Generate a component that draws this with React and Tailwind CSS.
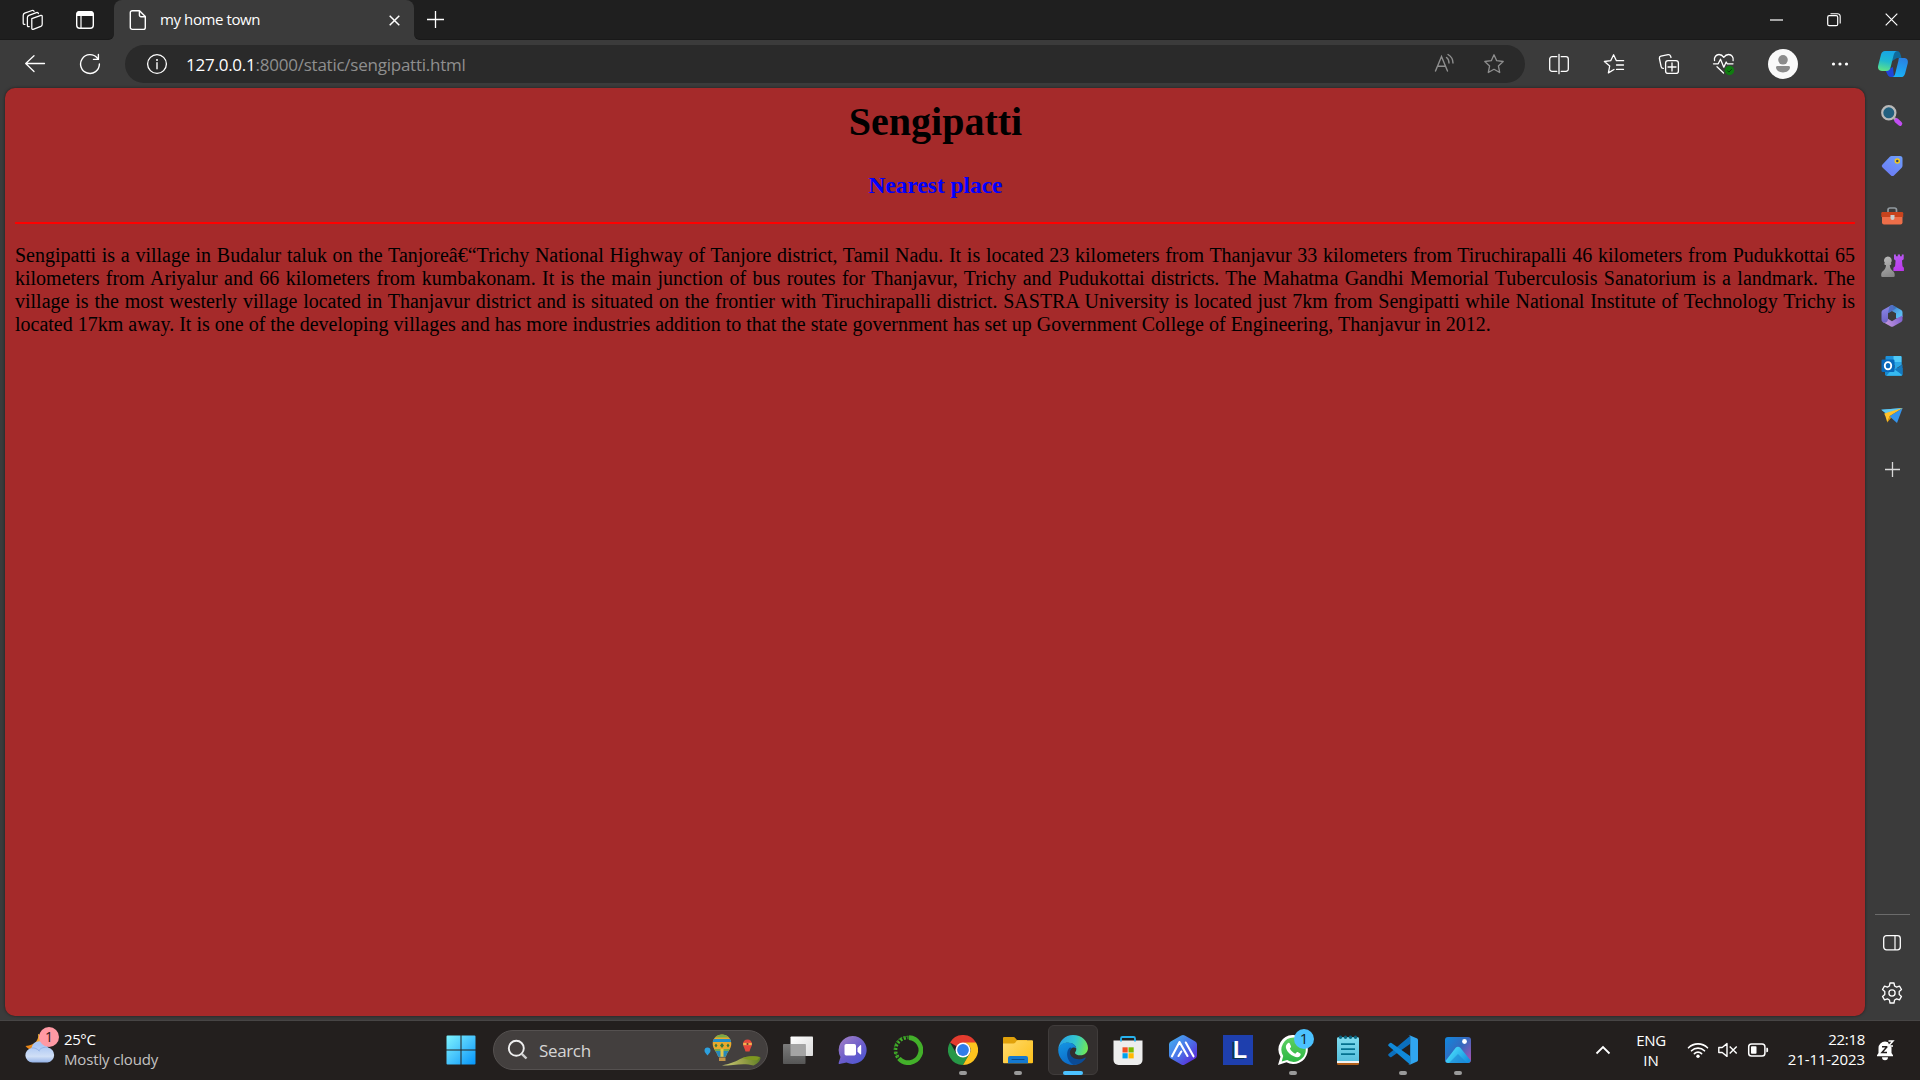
import React from "react";

const Svg = ({ w = 30, h = 30, children, className = "" }) => (
  <svg width={w} height={h} viewBox={`0 0 ${w} ${h}`} fill="none" className={`shrink-0 ${className}`}>
    {children}
  </svg>
);

const line = { stroke: "#fff", strokeWidth: 1.3, strokeLinecap: "round", strokeLinejoin: "round" };

/* ---------- tab strip ---------- */

const Workspaces = () => (
  <Svg w={22} h={22}>
    <g {...line} strokeWidth="1.25">
      <path d="M9.800 9.600 18.900 6.400a1 1 0 0 1 1.300 1v7.800a2.400 2.400 0 0 1-1.400 2.200l-7.600 3a1 1 0 0 1-1.400-1z" />
      <path d="M7.200 17.600c-1 .4-1.800-.1-1.800-1V8.600a2.400 2.400 0 0 1 1.500-2.200l7.500-2.800c1-.3 1.800 0 2 .9" />
      <path d="M2.900 15.300c-1 .4-1.700-.1-1.700-1V6.400a2.400 2.400 0 0 1 1.500-2.200L10.100 1.500c1-.3 1.700 0 1.900.8" />
    </g>
  </Svg>
);

const TabActions = () => (
  <Svg w={20} h={20}>
    <rect x="1.700" y="1.700" width="16.600" height="16.600" rx="3" stroke="#fff" strokeWidth="1.4" />
    <path d="M1.500 6V4a3 3 0 0 1 3-3h11a3 3 0 0 1 3 3v2z" fill="#fff" />
    <path d="M6 6v12" stroke="#fff" strokeWidth="1.2" />
  </Svg>
);

const Doc = () => (
  <Svg w={18} h={22}>
    <path {...line} strokeWidth="1.4" d="M3.200 1.700h7.300l5.800 5.800v11a1.900 1.900 0 0 1-1.900 1.900H3.200a1.900 1.900 0 0 1-1.900-1.900V3.600a1.900 1.900 0 0 1 1.900-1.900zM10.400 1.900v4.200a1.600 1.600 0 0 0 1.600 1.600h4.200" />
  </Svg>
);

const Cross = ({ s = 12, sw = 1.4 }) => (
  <Svg w={s} h={s}>
    <path d={`M.7.7 ${s - 0.7} ${s - 0.7}M${s - 0.7}.7.7 ${s - 0.7}`} stroke="#fff" strokeWidth={sw} />
  </Svg>
);

const Plus = ({ s = 18, c = "#fff" }) => (
  <Svg w={s} h={s}>
    <path d={`M${s / 2} 0v${s}M0 ${s / 2}h${s}`} stroke={c} strokeWidth="1.3" />
  </Svg>
);

/* ---------- toolbar ---------- */

const Back = () => (
  <Svg w={22} h={20}>
    <path {...line} strokeWidth="1.3" d="M10 1.800 1.700 9.500l8.300 8M2 9.500h18.500" />
  </Svg>
);
const Reload = () => (
  <Svg w={22} h={22}>
    <path {...line} strokeWidth="1.4" d="M20.400 11A9.400 9.400 0 1 1 18.300 5.100M19.400 1.500v4.900h-4.900" />
  </Svg>
);
const Info = () => (
  <Svg w={22} h={22}>
    <circle cx="11" cy="11" r="9.400" stroke="#fff" strokeWidth="1.3" />
    <path d="M11 9.700v6" stroke="#fff" strokeWidth="1.4" strokeLinecap="round" />
    <circle cx="11" cy="7" r="1" fill="#fff" />
  </Svg>
);
const ReadAloud = () => (
  <Svg w={22} h={22}>
    <g stroke="#8f8f8f" strokeWidth="1.4" strokeLinecap="round">
      <path d="M1.500 18 7.500 3.600 13.500 18M3.500 13.200h8" />
      <path d="M12.500 4.500c1.700 1.200 2.500 2.900 2.500 5.500M14 1.500c3.200 1.900 5 4.800 5 8.500" />
    </g>
  </Svg>
);
const Star = () => (
  <Svg w={22} h={22}>
    <path d="m11 1.800 2.700 5.900 6.500.8-4.800 4.400 1.300 6.600L11 16.300l-5.700 3.200 1.300-6.600-4.800-4.400 6.500-.8z" stroke="#8f8f8f" strokeWidth="1.3" strokeLinejoin="round" />
  </Svg>
);
const Split = () => (
  <Svg w={22} h={22}>
    <path {...line} strokeWidth="1.3" d="M8.800 3.700H4a2.300 2.300 0 0 0-2.300 2.300v10A2.300 2.300 0 0 0 4 18.300h4.800M11 1.300v19.400M13.200 3.700H18A2.300 2.300 0 0 1 20.300 6v10a2.300 2.300 0 0 1-2.300 2.300h-4.800" />
  </Svg>
);
const Favorites = () => (
  <Svg w={22} h={22}>
    <path {...line} d="M11 16.500 5.400 19.900l1.300-6.900L1.400 8.500l6.300-.8L10.600 1.800l2.800 5.900h7.200M13.500 12h7M13.500 16.400h7" />
  </Svg>
);
const Collections = () => (
  <Svg w={22} h={22}>
    <g {...line}>
      <rect x="7.600" y="7.600" width="12.800" height="12.800" rx="2.500" />
      <path d="M14 10v8M10 14h8" />
      <path d="M5.400 15.400c-1.200.1-1.900-.5-2.200-1.600L1.400 5.500c-.2-1.200.4-2 1.500-2.300l7.200-1.600c1.200-.2 2 .3 2.400 1.400l.5 1.500" />
    </g>
  </Svg>
);
const Essentials = () => (
  <Svg w={24} h={24}>
    <path {...line} d="M2.500 8.500C1.900 5.200 4.200 2.500 7 2.500c2 0 3.600 1 4.800 2.800C13 3.500 14.600 2.500 16.600 2.500c3.200 0 5.200 2.800 4.500 6.200M1.500 11.800h4.700l2.300-4.600 3.300 8 2.400-5.200 1 1.800h5.800M5 14.800l6.500 6.200" />
    <circle cx="17.500" cy="18.500" r="4.700" fill="#107c10" />
    <path d="m15.300 18.500 1.600 1.600 2.900-3" stroke="#0a3d0a" strokeWidth="1" />
  </Svg>
);
const Avatar = () => (
  <Svg>
    <circle cx="15" cy="15" r="15" fill="#f9f9f9" />
    <circle cx="15" cy="10.800" r="4.800" fill="#8b8b8b" />
    <path d="M9.500 17h11a1.500 1.500 0 0 1 1.500 1.600c-.2 3-3.200 4.900-7 4.900s-6.800-1.900-7-4.900A1.500 1.500 0 0 1 9.500 17z" fill="#8b8b8b" />
  </Svg>
);
const Dots = () => (
  <Svg w={18} h={6}>
    <circle cx="2.500" cy="3" r="1.600" fill="#fff" />
    <circle cx="9" cy="3" r="1.600" fill="#fff" />
    <circle cx="15.500" cy="3" r="1.600" fill="#fff" />
  </Svg>
);
const Copilot = () => (
  <Svg w={32} h={30}>
    <defs>
      <linearGradient id="cpA" x1="10" y1="1" x2="6" y2="21" gradientUnits="userSpaceOnUse">
        <stop stopColor="#16a3e8" /><stop offset=".55" stopColor="#20b9cf" /><stop offset="1" stopColor="#5be08c" />
      </linearGradient>
      <linearGradient id="cpB" x1="26" y1="8" x2="20" y2="28" gradientUnits="userSpaceOnUse">
        <stop stopColor="#2b7de0" /><stop offset="1" stopColor="#18b4f7" />
      </linearGradient>
    </defs>
    <path d="M16 2h4c2 0 3 1.500 3.700 4l.8 3H20l-5 3z" fill="#0f6a9c" />
    <path d="M8.500 21.500 16 18l1 10h-3c-2.200 0-3.200-1.500-3.800-3z" fill="#1f46d8" />
    <path d="M8 2h12c-2 .4-2.800 2-3.400 4.200l-3 12C13 20.600 12 22 9.500 22H5c-3 0-4.600-2.200-3.800-5.400L4 5.500C4.600 3.200 6 2 8 2z" fill="url(#cpA)" />
    <path d="M22 9h5c3 0 4.500 2.200 3.700 5.400l-2.600 10C27.500 26.800 26 28 24 28h-9c2-.3 2.700-1.600 3.300-3.800l3-12C21.700 10.500 21.500 9.500 22 9z" fill="url(#cpB)" />
  </Svg>
);

/* ---------- sidebar ---------- */

const SideSearch = () => (
  <Svg w={24} h={24}>
    <path d="m14 14 2.500 2.500" stroke="#aaa" strokeWidth="2.500" />
    <path d="m16.500 16.500 3.500 3.200" stroke="#c14df2" strokeWidth="4.500" strokeLinecap="round" />
    <circle cx="8.800" cy="8.800" r="6.600" fill="#22607f" stroke="#b9b9b9" strokeWidth="2.200" />
  </Svg>
);
const SideTag = () => (
  <Svg w={24} h={24}>
    <defs><linearGradient id="tg" x1="18" y1="2" x2="8" y2="22" gradientUnits="userSpaceOnUse"><stop stopColor="#6d9bfa" /><stop offset="1" stopColor="#6c7cf5" /></linearGradient></defs>
    <path d="M11.500 2H20a2.500 2.500 0 0 1 2.500 2.500v7.200c0 .8-.3 1.400-.8 2l-7.500 7.500a2.500 2.500 0 0 1-3.500 0L2.500 13.500a2 2 0 0 1 0-3l7.300-7.800A2.500 2.500 0 0 1 11.500 2z" fill="url(#tg)" />
    <circle cx="17.300" cy="7" r="2" fill="#30466b" stroke="#f4c81f" strokeWidth="1.500" />
  </Svg>
);
const SideToolbox = () => (
  <Svg w={24} h={20}>
    <path d="M8 6V4a2 2 0 0 1 2-2h4.500a2 2 0 0 1 2 2v2" stroke="#929aa0" strokeWidth="1.700" />
    <path d="M2 10h20.500v6.500a2 2 0 0 1-2 2H4a2 2 0 0 1-2-2z" fill="#ed6e49" />
    <path d="M2.500 6H22a1.200 1.200 0 0 1 1.200 1.200V11H1.300V7.200A1.200 1.200 0 0 1 2.500 6z" fill="#c8431d" />
    <path d="M10.500 9h4v3a2 2 0 0 1-4 0z" fill="#c8cdd0" />
  </Svg>
);
const SideGames = () => (
  <Svg w={24} h={26}>
    <defs>
      <linearGradient id="rk" x1="14" y1="2" x2="22" y2="19" gradientUnits="userSpaceOnUse"><stop stopColor="#b65cf3" /><stop offset="1" stopColor="#bd35ea" /></linearGradient>
      <linearGradient id="pw" x1="4" y1="4" x2="12" y2="24" gradientUnits="userSpaceOnUse"><stop stopColor="#b9b9b9" /><stop offset="1" stopColor="#848484" /></linearGradient>
    </defs>
    <path d="M14 1.500h1.900v1.700h1.900V1.500H20v1.700h1.800V1.500h1.900v4.700l-1.700 1.200.5 5.800 1.400 1.500V18H13.400v-3.300l1.700-1.500.5-5.800L14 6.200z" fill="url(#rk)" />
    <path d="M7.800 3.500a4 4 0 0 1 3 6.600c.7.200.7 1.600-.2 1.800-.4 0-.8.100-.8.100.1 2.800.9 4.300 2.700 5.700 1.500 1 2.200 2 2.200 4v1a1.300 1.300 0 0 1-1.300 1.300H2.500a1.300 1.300 0 0 1-1.300-1.300v-1c0-2 .7-3 2.200-4C5.100 16.300 5.900 14.800 6 12l-1-.1c-.9-.2-.9-1.600-.1-1.800a4 4 0 0 1 2.900-6.600z" fill="url(#pw)" />
  </Svg>
);
const Side365 = () => (
  <Svg w={24} h={24}>
    <defs>
      <linearGradient id="m1" x1="2" y1="3" x2="7" y2="20" gradientUnits="userSpaceOnUse"><stop stopColor="#8a86e6" /><stop offset="1" stopColor="#6a5fc0" /></linearGradient>
      <linearGradient id="m2" x1="10" y1="2" x2="22" y2="16" gradientUnits="userSpaceOnUse"><stop stopColor="#3b74c4" /><stop offset=".6" stopColor="#55b5ee" /><stop offset="1" stopColor="#62c6f5" /></linearGradient>
      <linearGradient id="m3" x1="5" y1="21" x2="21" y2="15" gradientUnits="userSpaceOnUse"><stop stopColor="#c698dd" /><stop offset="1" stopColor="#8465d2" /></linearGradient>
    </defs>
    <path d="M10.800 1.500a2.500 2.500 0 0 1 2.400 0l8 4.500a2.500 2.500 0 0 1 1.300 2.200V13L16 14.500V9.300L10.500 6.200 8 4z" fill="url(#m2)" />
    <path d="M22.500 11.500v4.300a2.500 2.500 0 0 1-1.300 2.200l-8 4.500a2.500 2.500 0 0 1-2.400 0l-8-4.500L8 14.700l4 2.600 4-2.600z" fill="url(#m3)" />
    <path d="M10.800 1.500 2.800 6a2.500 2.500 0 0 0-1.300 2.200v7.600c0 1.700 1.400 2.900 3 2.900C6.600 18.700 8 17.200 8 15V9.300l6-3.500-1-4.400a2.500 2.500 0 0 0-2.200.1z" fill="url(#m1)" />
    <path d="M9.500 2.300 8 9.300l6-3.500 3-2.200-3.800-2.100a2.500 2.500 0 0 0-2.400 0z" fill="#3a68b8" opacity=".7" />
  </Svg>
);
const SideOutlook = () => (
  <Svg w={24} h={22}>
    <path d="M5.500 2A1 1 0 0 1 6.500 1h14a1 1 0 0 1 1 1v8h-16z" fill="#1d91da" />
    <path d="M13.500 1h7a1 1 0 0 1 1 1v5h-8z" fill="#4fc9f7" />
    <path d="M5 13h17.500v6.500a1.300 1.300 0 0 1-1.300 1.300H6.300A1.300 1.300 0 0 1 5 19.500z" fill="#1689d2" />
    <path d="M12 14.500h3.500L22 20a1.300 1.300 0 0 1-1 .8H6.300z" fill="#35b9f1" />
    <path d="m22.500 9.500-7.500 5.300 7.500 5z" fill="#1479bf" />
    <path d="M14.500 7h7v3l-7 4.500z" fill="#2aa6e6" />
    <rect x="1.500" y="4.500" width="13" height="12.500" rx="1.200" fill="#0868ba" />
    <ellipse cx="8" cy="10.700" rx="3.200" ry="3.600" stroke="#fff" strokeWidth="1.900" />
  </Svg>
);
const SideDrop = () => (
  <Svg w={24} h={20}>
    <path d="M1.300 3.700 22.600 2 8.200 9.600z" fill="#39a9e6" />
    <path d="M22.600 2 17 17l-7.600-6.700z" fill="#3494ec" />
    <path d="m1.300 3.700 21.300-1.700L6.500 7.500z" fill="#61c7ef" />
    <path d="m4.200 7.400 18.400-5.400-12.800 8-2.500 6.500-1.800-6z" fill="#ffc22a" />
    <path d="m9.500 10.300-2.300 6.200 4-4.800z" fill="#e29a0c" />
  </Svg>
);
const PanelIcon = () => (
  <Svg w={20} h={18}>
    <rect x="1.700" y="1.700" width="16.600" height="14.200" rx="2.800" stroke="#fff" strokeWidth="1.300" />
    <path d="M13 2v14" stroke="#fff" strokeWidth="1.200" />
  </Svg>
);
const Gear = () => (
  <Svg w={24} h={24}>
    <path
      {...line}
      d="M10 2h4l.6 3 2 1.100 2.900-1 2 3.400-2.300 2v2.900l2.300 2-2 3.500-2.900-1-2 1.100-.6 3h-4l-.6-3-2-1.100-2.900 1-2-3.500 2.300-2v-2.900l-2.300-2 2-3.400 2.900 1 2-1.100z"
    />
    <circle cx="12" cy="12" r="3.100" stroke="#fff" strokeWidth="1.300" />
  </Svg>
);

/* ---------- taskbar ---------- */

const Weather = () => (
  <Svg w={34} h={38}>
    <defs>
      <linearGradient id="cl" x1="16" y1="17" x2="16" y2="36" gradientUnits="userSpaceOnUse"><stop stopColor="#a9c5f4" /><stop offset=".6" stopColor="#d0dff6" /><stop offset="1" stopColor="#86a8e4" /></linearGradient>
      <linearGradient id="mo" x1="14" y1="7" x2="6" y2="22" gradientUnits="userSpaceOnUse"><stop stopColor="#f6b63c" /><stop offset="1" stopColor="#e88213" /></linearGradient>
    </defs>
    <path d="M13 6c1.300 5-2.500 11.500-12.500 12 2.500 3.500 8 5 13 2l6-6V8z" fill="url(#mo)" />
    <path d="M7.500 34.500a7.300 7.300 0 0 1-1-14.500 8.500 8.500 0 0 1 16.500-.5 7.600 7.600 0 0 1-.5 15z" fill="url(#cl)" />
    <path d="M6.500 20c3-.6 6 1 8 3M13.500 23c2-3 6-4.500 9.500-3.500" stroke="#93b2e6" strokeWidth="1" />
  </Svg>
);
const Start = () => (
  <Svg>
    <defs><linearGradient id="st" x1="1" y1="1" x2="29" y2="29" gradientUnits="userSpaceOnUse"><stop stopColor="#7cf2fe" /><stop offset=".5" stopColor="#47c4fc" /><stop offset="1" stopColor="#0696fa" /></linearGradient></defs>
    <path d="M1.500.5H14.500V14.500H.5v-13a1 1 0 0 1 1-1zM15.500 .5h13a1 1 0 0 1 1 1v13H15.500zM.5 15.500H14.500v14H1.500a1 1 0 0 1-1-1zM15.500 15.500h14v13a1 1 0 0 1-1 1H15.500z" fill="url(#st)" />
  </Svg>
);
const SearchGlass = () => (
  <Svg w={22} h={22}>
    <circle cx="9.300" cy="9.300" r="7.500" stroke="#efefef" strokeWidth="1.900" />
    <path d="m14.800 14.800 4.700 4.700" stroke="#cfcfcf" strokeWidth="2.400" />
  </Svg>
);
const Balloons = () => (
  <Svg w={60} h={36}>
    <defs><linearGradient id="hill" x1="20" y1="31" x2="58" y2="24" gradientUnits="userSpaceOnUse"><stop stopColor="#c9cb78" /><stop offset=".5" stopColor="#9aa04a" /><stop offset="1" stopColor="#5b7d22" /></linearGradient></defs>
    <path d="M19 33.500c8-2 12-3 18-6.500 8-3.500 16-3 20.500-1.500 0 3-3 6.500-7 8-10-3-20 0-31.500 0z" fill="url(#hill)" />
    <path d="M39 26c6-2 13-2.200 18-1l-3 3.200c-6 .5-11-1-15-2.200z" fill="#7f981f" />
    <path d="M1.500 18.500a3 3 0 1 1 6 0c0 2-1.700 3.300-3 5-1.300-1.700-3-3-3-5z" fill="#2da0de" />
    <clipPath id="bal"><path d="M19 2.500c5.500 0 9.300 4 9.300 9.200 0 5-4 8-5.500 13h-7.600c-1.500-5-5.500-8-5.500-13 0-5.200 3.800-9.200 9.300-9.200z" /></clipPath>
    <g clipPath="url(#bal)">
      <path d="M9 2h20v24H9z" fill="#e9a92d" />
      <path d="M9 2h20v3.500H9zM9 17h20v2H9z" fill="#78a94a" />
      <path d="M9 7h20v3H9z" fill="#218ec9" />
      <path d="M9 19h20v6H9z" fill="#2689bb" />
      <path d="M17.500 17h3v8h-3z" fill="#e3c54a" />
      <path d="M13 11.500l1.500 2-1.500 2-1.500-2zM19 11l2 2.500-2 2.500-2-2.500zM25 11.500l1.500 2-1.500 2-1.500-2z" fill="#39773c" />
    </g>
    <path d="M16 25.500h6.500v3.500H16z" fill="#c49447" />
    <path d="M44.500 7.500c2.700 0 4.500 2 4.500 4.500 0 2.300-1.700 4-2.500 7.500h-4c-.8-3.500-2.500-5.200-2.500-7.500 0-2.500 1.800-4.500 4.500-4.500z" fill="#e4473c" />
    <path d="M40.200 12h8.600" stroke="#f2b04f" strokeWidth="2.300" />
    <circle cx="44.500" cy="12" r="1.100" fill="#6d352c" />
  </Svg>
);
const TaskView = () => (
  <Svg>
    <defs>
      <linearGradient id="tv" x1="8" y1="1" x2="29" y2="21" gradientUnits="userSpaceOnUse"><stop stopColor="#fff" /><stop offset="1" stopColor="#dcdcdc" /></linearGradient>
      <linearGradient id="tw" x1="0" y1="9" x2="0" y2="29" gradientUnits="userSpaceOnUse"><stop stopColor="#7b7b7b" /><stop offset="1" stopColor="#565656" /></linearGradient>
    </defs>
    <rect x="7.500" y="1.500" width="22.500" height="19.500" rx=".8" fill="url(#tv)" />
    <rect x="0" y="9" width="22.500" height="20" rx=".8" fill="url(#tw)" />
    <path d="M7.500 9h15v12h-15z" fill="#a4a4a4" />
  </Svg>
);
const Chat = () => (
  <Svg>
    <defs><linearGradient id="ch" x1="4" y1="3" x2="24" y2="28" gradientUnits="userSpaceOnUse"><stop stopColor="#9c7cc6" /><stop offset=".55" stopColor="#6b5dcb" /><stop offset="1" stopColor="#4f57d3" /></linearGradient></defs>
    <path d="M14.500 1a14 14 0 1 1-6 26.600L1.500 29c-1 0-1-.6-.8-1.300L2.500 22A14 14 0 0 1 14.500 1z" fill="url(#ch)" />
    <rect x="6.500" y="9" width="11.500" height="11.500" rx="1.700" fill="#fff" />
    <path d="m19.500 13 2.700-2.700c.5-.4 1-.2 1 .5v8c0 .6-.5.8-1 .4l-2.700-2.500z" fill="#fff" />
  </Svg>
);
const Anaconda = () => (
  <Svg>
    <path d="M16 2.700A12.500 12.500 0 1 1 6 23.500" stroke="#43b02a" strokeWidth="4.700" />
    <path d="M7.500 25a12.500 12.500 0 0 1 8-22.500" stroke="#43b02a" strokeWidth="3.600" strokeDasharray="2.200 1.600" />
    <path d="M5.300 22.500A12.300 12.300 0 0 1 15 1.500" stroke="#328a22" strokeWidth="1.200" strokeDasharray="1.500 1.300" />
  </Svg>
);
const Chrome = () => (
  <Svg>
    <path d="M15 15 2 7.500a15 15 0 0 1 26 0z" fill="#e33b2e" />
    <path d="M2 7.500A15 15 0 0 0 15 30l6.500-11.300L15 15 8.500 18.700z" fill="#279847" />
    <path d="M28 7.500A15 15 0 0 1 15 30l6.500-11.200A7.500 7.500 0 0 0 15 7.500z" fill="#fcc31e" />
    <circle cx="15" cy="15" r="7.500" fill="#fff" />
    <circle cx="15" cy="15" r="5.900" fill="#2f7de9" />
  </Svg>
);
const Folder = () => (
  <Svg>
    <defs><linearGradient id="fo" x1="2" y1="6" x2="28" y2="29" gradientUnits="userSpaceOnUse"><stop stopColor="#ffd96a" /><stop offset="1" stopColor="#fdc11c" /></linearGradient></defs>
    <path d="M0 3a1 1 0 0 1 1-1h9.500c.8 0 1.200.3 1.700.9L14 5h10v6H0z" fill="#e1a10a" />
    <path d="M0 8.500h10.500c.8 0 1.200-.2 1.700-.8L13.500 6c.4-.5.8-.7 1.500-.7h14a1 1 0 0 1 1 1v21a1 1 0 0 1-1 1H1a1 1 0 0 1-1-1z" fill="url(#fo)" />
    <path d="M5 28.300V23a2 2 0 0 1 2-2h16a2 2 0 0 1 2 2v5.300z" fill="#1479d0" />
    <path d="M9 24.500h12" stroke="#0b4c8b" strokeWidth="1.100" strokeLinecap="round" />
  </Svg>
);
const Edge = () => (
  <Svg>
    <defs>
      <linearGradient id="e1" x1="3" y1="7" x2="29" y2="14" gradientUnits="userSpaceOnUse"><stop stopColor="#2aa5e3" /><stop offset=".5" stopColor="#33c6cf" /><stop offset="1" stopColor="#6fe857" /></linearGradient>
      <linearGradient id="e2" x1="3" y1="10" x2="12" y2="30" gradientUnits="userSpaceOnUse"><stop stopColor="#1390e0" /><stop offset="1" stopColor="#0c69c6" /></linearGradient>
    </defs>
    <path d="M.3 14C1 6 7.200 0 15 0c9 0 15 6.300 15 13 0 4.500-3.500 7.300-7.500 7.300-3.400 0-5.500-1.300-5.500-2.400 0-.8 1.300-1.300 1.300-3.900 0-3.500-3.500-6.300-8.300-6.300C5.500 7.700 2 10 .3 14z" fill="url(#e1)" />
    <path d="M.2 14.500C1.200 10.300 4.800 7.500 9.500 7.500c5 0 8.500 2.800 8.700 6-1.500-1.800-6.700-1-6.700 4 0 6 6.500 9.500 12 8.500-1.700 2.300-5 4-8.500 4C7 30 0 23.500.2 14.500z" fill="url(#e2)" />
    <path d="M12 12.500c-4.500 3.500-4 13 3.500 17.400 4.500.2 9-2 12-6.400.4-.7 0-1.200-.8-.8-6.500 3.500-14.700.5-14.700-5.200 0-2 .8-3.500 2-4.500z" fill="#0b4b95" />
  </Svg>
);
const Store = () => (
  <Svg>
    <path d="M.5 5.500h29V25a5 5 0 0 1-5 5h-19a5 5 0 0 1-5-5z" fill="#ededed" />
    <path d="M8 6.500V3.500A1.500 1.500 0 0 1 9.500 2h11A1.500 1.500 0 0 1 22 3.500v3" stroke="#27b2ee" strokeWidth="1.800" />
    <path d="M9.500 12.300h5.200v5.200H9.500z" fill="#f04e22" />
    <path d="M15.500 12.300h5.200v5.200h-5.200z" fill="#7cb900" />
    <path d="M9.500 18.200h5.200v5.200H9.500z" fill="#00a2ed" />
    <path d="M15.500 18.200h5.200v5.200h-5.200z" fill="#ffb800" />
  </Svg>
);
const HexApp = () => (
  <Svg>
    <defs><linearGradient id="hx" x1="3" y1="5" x2="26" y2="26" gradientUnits="userSpaceOnUse"><stop stopColor="#45a6ef" /><stop offset=".5" stopColor="#4a72e8" /><stop offset="1" stopColor="#5a2cd8" /></linearGradient></defs>
    <path d="M13.200.6a3.600 3.600 0 0 1 3.600 0l10.500 6A3.500 3.500 0 0 1 29 9.700v10.600a3.500 3.500 0 0 1-1.700 3.100l-10.500 6a3.600 3.600 0 0 1-3.600 0l-10.500-6A3.500 3.500 0 0 1 1 20.300V9.700a3.500 3.500 0 0 1 1.700-3.100z" fill="url(#hx)" />
    <path d="M4 21.300 11.500 7l8 14M10.500 21l2.800-4.500M17.800 7.500l7.700 13.800" stroke="#fff" strokeWidth="2.100" strokeLinecap="round" strokeLinejoin="round" />
  </Svg>
);
const LApp = () => (
  <div className="flex h-[30px] w-[30px] items-center justify-center bg-[#1e3fae] pl-[4px] font-['Liberation_Sans'] text-[23px] leading-none font-bold text-white [text-shadow:-2px_1px_0_#0c3350]">
    L
  </div>
);
const WhatsApp = () => (
  <Svg>
    <defs><linearGradient id="wa" x1="15" y1="2" x2="15" y2="28" gradientUnits="userSpaceOnUse"><stop stopColor="#5ed063" /><stop offset="1" stopColor="#2cb642" /></linearGradient></defs>
    <path d="M15.500 0a14.500 14.500 0 1 1-7 27.300L0 30l2.500-8.200A14.500 14.500 0 0 1 15.500 0z" fill="#fff" />
    <path d="M15.500 2.500a12.200 12.200 0 1 1-6.300 22.600L3.700 26.500 5.200 21A12.200 12.200 0 0 1 15.500 2.500z" fill="url(#wa)" />
    <path d="M9.500 8.500c.8-.9 1.800-.9 2.300 0l1.200 2.700c.2.600-.1 1.200-1.200 2.400 1.300 2.500 3 4 5.500 5.100 1.400-1.500 1.800-1.900 2.400-1.600l2.600 1.400c.8.500.3 2-.5 2.700-1.500 1.300-3.500 1.200-6 .1-3.500-1.500-6.300-4.300-7.500-7.300-.8-2-.5-4 1.200-5.500z" fill="#fff" />
  </Svg>
);
const Notepad = () => (
  <Svg>
    <defs><linearGradient id="np" x1="15" y1="2" x2="15" y2="27" gradientUnits="userSpaceOnUse"><stop stopColor="#7fdbee" /><stop offset="1" stopColor="#55bfdd" /></linearGradient></defs>
    <path d="M4 26h22v2.500A1.500 1.500 0 0 1 24.500 30h-19A1.500 1.500 0 0 1 4 28.500z" fill="#b3601a" />
    <path d="M4 25h22v3H4z" fill="#f2f2f2" />
    <path d="M4 3.500A1.500 1.500 0 0 1 5.500 2h19A1.500 1.500 0 0 1 26 3.500V26H4z" fill="url(#np)" />
    <path d="M8 9.200h14M8 14.200h14M8 19.200h14" stroke="#04708f" strokeWidth="1.700" />
    <g fill="#0b6580"><circle cx="7.500" cy="2.300" r="1.700" /><circle cx="12.500" cy="2.300" r="1.700" /><circle cx="17.500" cy="2.300" r="1.700" /><circle cx="22.500" cy="2.300" r="1.700" /></g>
  </Svg>
);
const VSCode = () => (
  <Svg>
    <path d="m22 9-18.500 13a1.300 1.300 0 0 1-1.500 0L.6 20.700c-.6-.6-.6-1.200 0-1.800L22 1z" fill="#0b6fbd" />
    <path d="M22 21 3.500 8A1.300 1.300 0 0 0 2 8L.6 9.300c-.6.600-.6 1.200 0 1.800L22 29.500z" fill="#1089d9" />
    <path d="M21.500 29.800c-.6 0-1-.2-1.500-.6 1 .8 2.200.2 2.200-1V1.800c0-1.200-1.300-1.800-2.200-1 .6-.6 1.400-.7 2.100-.4l6.500 2.900c.9.400 1.400 1.100 1.400 2v19.400c0 .9-.5 1.600-1.400 2l-6.200 2.900z" fill="#30a5f0" />
  </Svg>
);
const Photos = () => (
  <Svg>
    <defs>
      <linearGradient id="p1" x1="3" y1="3" x2="28" y2="22" gradientUnits="userSpaceOnUse"><stop stopColor="#1386dc" /><stop offset=".55" stopColor="#3568be" /><stop offset="1" stopColor="#9a55b4" /></linearGradient>
      <linearGradient id="p2" x1="7" y1="14" x2="24" y2="28" gradientUnits="userSpaceOnUse"><stop stopColor="#4adcfa" /><stop offset="1" stopColor="#1490e0" /></linearGradient>
    </defs>
    <rect x="2" y="2" width="26" height="26" rx="3" fill="url(#p1)" />
    <path d="m2.500 26 10.200-13.200a3 3 0 0 1 4.600 0L27.700 25.500A3 3 0 0 1 25 28H5a3 3 0 0 1-2.500-2z" fill="url(#p2)" />
    <path d="m15 19-9 9h18z" fill="#1d7fd0" opacity=".55" />
    <circle cx="21.500" cy="6.500" r="2.400" fill="#fff" />
  </Svg>
);
const Chevron = () => (
  <Svg w={16} h={10}>
    <path d="M1.500 8.500 8 2l6.500 6.500" stroke="#fff" strokeWidth="1.800" />
  </Svg>
);
const Wifi = () => (
  <Svg w={22} h={18}>
    <g stroke="#fff" strokeWidth="1.600" strokeLinecap="round">
      <path d="M1.500 6.800a13.400 13.400 0 0 1 19 0M4.500 9.800a9.200 9.200 0 0 1 13 0M7.400 12.600a5.100 5.100 0 0 1 7.200 0" />
    </g>
    <circle cx="11" cy="15.200" r="1.700" fill="#fff" />
  </Svg>
);
const Muted = () => (
  <Svg w={22} h={18}>
    <path d="M1.800 6.500h3.400L10 2.600v12.800L5.200 11.500H1.800z" stroke="#fff" strokeWidth="1.400" strokeLinejoin="round" />
    <path d="m12.700 5.500 7 7m0-7-7 7" stroke="#fff" strokeWidth="1.400" />
  </Svg>
);
const Battery = () => (
  <Svg w={22} h={16}>
    <rect x="1.700" y="2" width="16.200" height="12" rx="2.800" stroke="#fff" strokeWidth="1.500" />
    <rect x="4" y="4.300" width="5.500" height="7.500" rx=".8" fill="#fff" />
    <path d="M19.300 5.800h.6c.8 0 1.200.5 1.200 1.200v2c0 .7-.4 1.200-1.200 1.200h-.6z" fill="#fff" />
  </Svg>
);
const Bell = () => (
  <Svg w={20} h={22}>
    <path d="M3.500 9a6.500 6.500 0 0 1 13 0v5l1.500 2.300v1H2v-1L3.500 14zM7 18.300h6a3 3 0 0 1-6 0z" fill="#fff" />
    <path d="M7 7.800h5l-5 5.600h5" stroke="#231f1e" strokeWidth="1.500" />
    <path d="M12.200 1h6.500v6.500h-4z" fill="#231f1e" />
    <path d="M13.500 2h4.500L13.500 7H18" stroke="#fff" strokeWidth="1.500" />
  </Svg>
);

const APPS = [
  { icon: TaskView }, { icon: Chat }, { icon: Anaconda }, { icon: Chrome, run: true }, { icon: Folder, run: true },
  { icon: Edge, active: true }, { icon: Store }, { icon: HexApp }, { icon: LApp }, { icon: WhatsApp, run: true, badge: "1" },
  { icon: Notepad }, { icon: VSCode, run: true }, { icon: Photos, run: true },
];

const AppButton = ({ icon: Icon, run, active, badge }) => (
  <div className="flex h-full w-[55px] pt-[4px] pl-[2px]">
    <div className={`relative flex h-[50px] w-[50px] items-center justify-center rounded-md ${active ? "border border-[#403c3b] bg-[#332f2e]" : ""}`}>
      <Icon />
      {run && <span className="absolute bottom-0 h-[4px] w-[8px] rounded-full bg-[#9a9a9a]" />}
      {active && <span className="absolute -bottom-px h-[4px] w-[20px] rounded-full bg-[#4cc2ff]" />}
      {badge && (
        <span className="absolute top-[4px] left-[26px] flex h-5 w-5 items-center justify-center rounded-full bg-[#4cc2ff] pb-px text-[15px] leading-none text-[#10222c]">
          {badge}
        </span>
      )}
    </div>
  </div>
);

const Cell = ({ w, children }) => (
  <div className={`flex h-full shrink-0 items-center justify-center ${w}`}>{children}</div>
);

export default function App() {
  return (
    <div className="flex h-[1080px] w-[1920px] flex-col overflow-hidden bg-[#3b3b3b] font-['Open_Sans','Noto_Sans',sans-serif] text-white">
      {/* tab strip */}
      <header className="flex h-10 shrink-0 bg-[#3b3b3b]">
        <div className="flex w-[114px] items-center rounded-br-md border-b border-[#191919] bg-[#1f1f1f] pl-[22px]">
          <Workspaces />
          <div className="w-[31px]" />
          <TabActions />
        </div>
        <div className="flex w-[300px] bg-[#1f1f1f]">
          <div className="flex w-full items-center rounded-t-lg bg-[#3b3b3b] pl-[15px]">
            <Doc />
            <span className="ml-[13px] flex-1 pb-[2px] text-[15px] leading-none tracking-[-0.4px] whitespace-nowrap">my home town</span>
            <Cross s={11} sw={1.5} />
            <div className="w-[14px]" />
          </div>
        </div>
        <div className="flex flex-1 items-center rounded-bl-md border-b border-[#191919] bg-[#1f1f1f] pl-[13px]">
          <Plus s={17} />
          <div className="flex-1" />
          <Cell w="w-[57px]">
            <Svg w={13} h={2}><path d="M0 1h13" stroke="#fff" strokeWidth="1.200" /></Svg>
          </Cell>
          <Cell w="w-[57px]">
            <Svg w={14} h={14}>
              <rect x=".7" y="2.700" width="10" height="10" rx="1.500" stroke="#fff" strokeWidth="1.200" />
              <path d="M3.500.7h7a2.700 2.700 0 0 1 2.700 2.700v7" stroke="#fff" strokeWidth="1.100" />
            </Svg>
          </Cell>
          <Cell w="w-[58px]"><Cross s={13} sw={1.2} /></Cell>
        </div>
      </header>

      {/* toolbar */}
      <nav className="flex h-12 shrink-0 items-center">
        <div className="w-[24px]" />
        <Back />
        <div className="w-[33px]" />
        <Reload />
        <div className="w-[24px]" />
        <div className="flex h-[38px] w-[1400px] items-center rounded-full bg-[#2a2a2a] pl-[21px]">
          <Info />
          <div className="ml-[18px] flex-1 text-[17px] leading-none tracking-[-0.24px] whitespace-nowrap text-[#8f8f8f]">
            <span className="text-white">127.0.0.1</span>:8000/static/sengipatti.html
          </div>
          <ReadAloud />
          <div className="w-[27px]" />
          <Star />
          <div className="w-[20px]" />
        </div>
        <div className="w-[6px]" />
        <Cell w="w-[55px]"><Split /></Cell>
        <Cell w="w-[55px]"><Favorites /></Cell>
        <Cell w="w-[55px]"><Collections /></Cell>
        <Cell w="w-[56px]"><Essentials /></Cell>
        <Cell w="w-[62px]"><Avatar /></Cell>
        <Cell w="w-[52px]"><Dots /></Cell>
        <Cell w="w-[54px]"><Copilot /></Cell>
      </nav>

      {/* page and sidebar */}
      <div className="flex h-[932px] shrink-0 pb-1 pl-[5px]">
        <main className="w-[1860px] rounded-[10px] bg-[#a52a2a] px-[10px] pt-[11px] font-['Liberation_Serif','Times_New_Roman',serif] text-black shadow-[0_0_3px_rgba(0,0,0,0.5)]">
          <h1 className="pl-px text-center text-[40px] leading-[46px] font-bold">Sengipatti</h1>
          <h3 className="mt-[27px] pl-px text-center text-[23.4px] leading-[27px] font-bold text-[#0000ff]">Nearest place</h3>
          <hr className="mt-[23px] h-[2px] border-0 bg-[#ff0000]" />
          <p className="mt-[20px] text-justify text-[20px] leading-[23px]">
            Sengipatti is a village in Budalur taluk on the Tanjoreâ€“Trichy National Highway of Tanjore district, Tamil Nadu. It is located 23 kilometers from Thanjavur 33 kilometers from Tiruchirapalli 46 kilometers from Pudukkottai 65 kilometers from Ariyalur and 66 kilometers from kumbakonam. It is the main junction of bus routes for Thanjavur, Trichy and Pudukottai districts. The Mahatma Gandhi Memorial Tuberculosis Sanatorium is a landmark. The village is the most westerly village located in Thanjavur district and is situated on the frontier with Tiruchirapalli district. SASTRA University is located just 7km from Sengipatti while National Institute of Technology Trichy is located 17km away. It is one of the developing villages and has more industries addition to that the state government has set up Government College of Engineering, Thanjavur in 2012.
          </p>
        </main>
        <aside className="flex w-[55px] flex-col items-center pt-[3px] pr-px">
          {[SideSearch, SideTag, SideToolbox, SideGames, Side365, SideOutlook, SideDrop].map((I, i) => (
            <div key={i} className="flex h-[50px] items-center"><I /></div>
          ))}
          <div className="flex h-[56px] items-center"><Plus s={15} c="#d8d8d8" /></div>
          <div className="flex-1" />
          <div className="h-px w-[35px] bg-[#6b6b6b]" />
          <div className="flex h-[56px] items-center"><PanelIcon /></div>
          <div className="flex h-[44px] items-center"><Gear /></div>
          <div className="h-[1px]" />
        </aside>
      </div>

      {/* taskbar */}
      <footer className="flex h-[60px] shrink-0 border-t border-[#474545] bg-[#231f1e]">
        <div className="flex w-[431px] pl-[25px]">
          <div className="relative pt-[7px]">
            <Weather />
            <span className="absolute top-[6px] left-[14px] flex h-5 w-5 items-center justify-center rounded-full bg-[#ff99a4] text-[14px] leading-none text-[#2b1517]">1</span>
          </div>
          <div className="ml-[5px] pt-[8px] text-[15px] leading-5 whitespace-nowrap">
            <div className="tracking-[-0.4px]">25°C</div>
            <div className="tracking-[-0.15px] text-[#c4c2c2]">Mostly cloudy</div>
          </div>
        </div>
        <div className="mr-[2px] flex w-[60px] items-center justify-center pb-px"><Start /></div>
        <div className="mt-[9px] flex h-10 w-[275px] items-center rounded-full border border-[#555150] bg-[#433f3e] pl-[13px]">
          <SearchGlass />
          <span className="ml-[10px] flex-1 text-[17px] leading-none tracking-[-0.35px] text-[#d6d5d5]">Search</span>
          <Balloons />
          <div className="w-[4px]" />
        </div>
        <div className="ml-[3px] flex w-[715px]">
          {APPS.map((a, i) => <AppButton key={i} {...a} />)}
        </div>
        <div className="flex flex-1 items-center pb-px">
          <div className="w-[109px]" />
          <Chevron />
          <div className="flex w-[76px] flex-col items-center pb-px pl-[4px] text-[15px] leading-5">
            <span className="tracking-[-0.3px]">ENG</span>
            <span>IN</span>
          </div>
          <Wifi />
          <div className="w-[8px]" />
          <Muted />
          <div className="w-[8px]" />
          <Battery />
          <div className="w-[96px] pb-[2px] text-right text-[15px] leading-5 tracking-[-0.1px] whitespace-nowrap">
            <div className="tracking-[-0.3px]">22:18</div>
            <div>21-11-2023</div>
          </div>
          <div className="w-[10px]" />
          <Bell />
        </div>
      </footer>
    </div>
  );
}
